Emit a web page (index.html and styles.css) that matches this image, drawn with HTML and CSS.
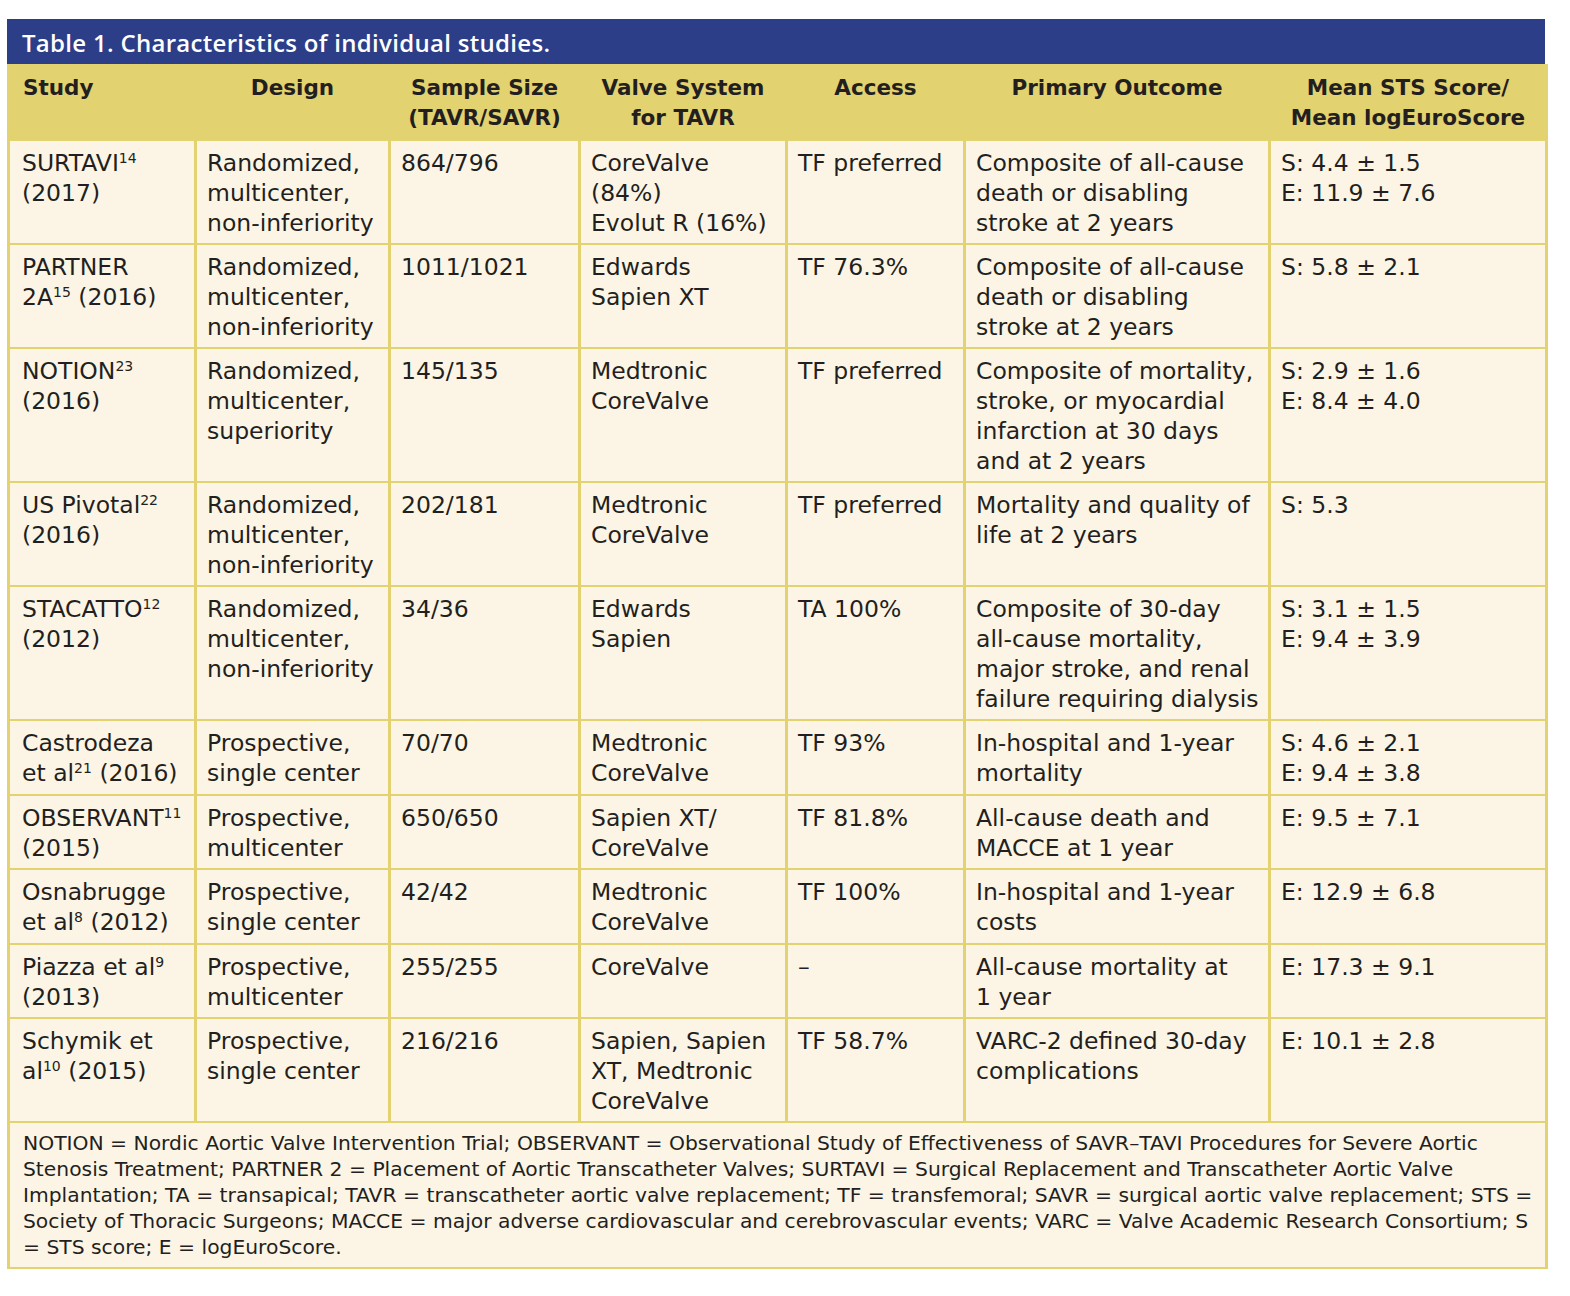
FILE: index.html
```html
<!DOCTYPE html>
<html>
<head>
<meta charset="utf-8">
<link rel="stylesheet" href="styles.css">
</head>
<body>
<div class="wrap">
  <div class="title">Table 1. Characteristics of individual studies.</div>
  <table class="studies">
    <colgroup>
      <col class="c1"><col class="c2"><col class="c3"><col class="c4"><col class="c5"><col class="c6"><col class="c7">
    </colgroup>
    <thead>
      <tr>
        <th class="left">Study</th>
        <th>Design</th>
        <th>Sample Size<br>(TAVR/SAVR)</th>
        <th>Valve System<br>for TAVR</th>
        <th>Access</th>
        <th>Primary Outcome</th>
        <th>Mean STS Score/<br>Mean logEuroScore</th>
      </tr>
    </thead>
    <tbody>
      <tr>
        <td>SURTAVI<sup>14</sup><br>(2017)</td>
        <td>Randomized,<br>multicenter,<br>non-inferiority</td>
        <td>864/796</td>
        <td>CoreValve<br>(84%)<br>Evolut R (16%)</td>
        <td>TF preferred</td>
        <td>Composite of all-cause<br>death or disabling<br>stroke at 2 years</td>
        <td>S: 4.4 ± 1.5<br>E: 11.9 ± 7.6</td>
      </tr>
      <tr>
        <td>PARTNER<br>2A<sup>15</sup> (2016)</td>
        <td>Randomized,<br>multicenter,<br>non-inferiority</td>
        <td>1011/1021</td>
        <td>Edwards<br>Sapien XT</td>
        <td>TF 76.3%</td>
        <td>Composite of all-cause<br>death or disabling<br>stroke at 2 years</td>
        <td>S: 5.8 ± 2.1</td>
      </tr>
      <tr>
        <td>NOTION<sup>23</sup><br>(2016)</td>
        <td>Randomized,<br>multicenter,<br>superiority</td>
        <td>145/135</td>
        <td>Medtronic<br>CoreValve</td>
        <td>TF preferred</td>
        <td>Composite of mortality,<br>stroke, or myocardial<br>infarction at 30 days<br>and at 2 years</td>
        <td>S: 2.9 ± 1.6<br>E: 8.4 ± 4.0</td>
      </tr>
      <tr>
        <td>US Pivotal<sup>22</sup><br>(2016)</td>
        <td>Randomized,<br>multicenter,<br>non-inferiority</td>
        <td>202/181</td>
        <td>Medtronic<br>CoreValve</td>
        <td>TF preferred</td>
        <td>Mortality and quality of<br>life at 2 years</td>
        <td>S: 5.3</td>
      </tr>
      <tr>
        <td>STACATTO<sup>12</sup><br>(2012)</td>
        <td>Randomized,<br>multicenter,<br>non-inferiority</td>
        <td>34/36</td>
        <td>Edwards<br>Sapien</td>
        <td>TA 100%</td>
        <td>Composite of 30-day<br>all-cause mortality,<br>major stroke, and renal<br>failure requiring dialysis</td>
        <td>S: 3.1 ± 1.5<br>E: 9.4 ± 3.9</td>
      </tr>
      <tr class="two">
        <td>Castrodeza<br>et al<sup>21</sup> (2016)</td>
        <td>Prospective,<br>single center</td>
        <td>70/70</td>
        <td>Medtronic<br>CoreValve</td>
        <td>TF 93%</td>
        <td>In-hospital and 1-year<br>mortality</td>
        <td>S: 4.6 ± 2.1<br>E: 9.4 ± 3.8</td>
      </tr>
      <tr>
        <td>OBSERVANT<sup>11</sup><br>(2015)</td>
        <td>Prospective,<br>multicenter</td>
        <td>650/650</td>
        <td>Sapien XT/<br>CoreValve</td>
        <td>TF 81.8%</td>
        <td>All-cause death and<br>MACCE at 1 year</td>
        <td>E: 9.5 ± 7.1</td>
      </tr>
      <tr class="two">
        <td>Osnabrugge<br>et al<sup>8</sup> (2012)</td>
        <td>Prospective,<br>single center</td>
        <td>42/42</td>
        <td>Medtronic<br>CoreValve</td>
        <td>TF 100%</td>
        <td>In-hospital and 1-year<br>costs</td>
        <td>E: 12.9 ± 6.8</td>
      </tr>
      <tr>
        <td>Piazza et al<sup>9</sup><br>(2013)</td>
        <td>Prospective,<br>multicenter</td>
        <td>255/255</td>
        <td>CoreValve</td>
        <td>–</td>
        <td>All-cause mortality at<br>1 year</td>
        <td>E: 17.3 ± 9.1</td>
      </tr>
      <tr>
        <td>Schymik et<br>al<sup>10</sup> (2015)</td>
        <td>Prospective,<br>single center</td>
        <td>216/216</td>
        <td>Sapien, Sapien<br>XT, Medtronic<br>CoreValve</td>
        <td>TF 58.7%</td>
        <td>VARC-2 defined 30-day<br>complications</td>
        <td>E: 10.1 ± 2.8</td>
      </tr>
    </tbody>
    <tfoot>
      <tr>
        <td colspan="7" class="notes">NOTION = Nordic Aortic Valve Intervention Trial; OBSERVANT = Observational Study of Effectiveness of SAVR–TAVI Procedures for Severe Aortic<br>Stenosis Treatment; PARTNER 2 = Placement of Aortic Transcatheter Valves; SURTAVI = Surgical Replacement and Transcatheter Aortic Valve<br>Implantation; TA = transapical; TAVR = transcatheter aortic valve replacement; TF = transfemoral; SAVR = surgical aortic valve replacement; STS =<br>Society of Thoracic Surgeons; MACCE = major adverse cardiovascular and cerebrovascular events; VARC = Valve Academic Research Consortium; S<br>= STS score; E = logEuroScore.</td>
      </tr>
    </tfoot>
  </table>
</div>
</body>
</html>
```

FILE: styles.css
```css
body {
  margin: 0;
  background: #ffffff;
  font-family: "DejaVu Sans", "Open Sans", sans-serif;
  color: #231f20;
}

.wrap {
  margin: 19px 0 0 7px;
  width: 1538px;
}

.title {
  background: #2c3e88;
  color: #ffffff;
  font-family: "Open Sans", "DejaVu Sans", sans-serif;
  font-size: 24px;
  letter-spacing: 0.3px;
  font-weight: 600;
  height: 45px;
  line-height: 47px;
  padding-left: 15px;
  box-sizing: border-box;
  white-space: nowrap;
}

.studies {
  width: 1538px;
  table-layout: fixed;
  border-collapse: collapse;
  background: #fcf5e6;
  font-size: 23.5px;
  line-height: 30px;
}

.c1 { width: 187px; }
.c2 { width: 194px; }
.c3 { width: 190px; }
.c4 { width: 207px; }
.c5 { width: 178px; }
.c6 { width: 305px; }
.c7 { width: 277px; }

.studies th {
  background: #e3d270;
  font-size: 21.5px;
  font-weight: bold;
  text-align: center;
  vertical-align: top;
  padding: 9px 2px 6px 2px;
  border-left: 3px solid #e3d270;
  border-right: 3px solid #e3d270;
  white-space: nowrap;
}

.studies th.left {
  text-align: left;
  padding-left: 13px;
}

.studies td {
  vertical-align: top;
  text-align: left;
  padding: 7px 2px 5px 10px;
  border: 3px solid #e3d270;
  border-top-width: 2px;
  border-bottom-width: 0;
  white-space: nowrap;
}

.studies tr.two td {
  padding-bottom: 6px;
}

.studies tbody td:first-child {
  padding-left: 12px;
}

.studies sup {
  font-size: 14px;
  line-height: 0;
  vertical-align: 8px;
}

.studies td.notes {
  font-size: 20.3px;
  line-height: 26px;
  padding: 7px 4px 7px 13px;
  border-top-width: 2px;
  border-bottom-width: 2px;
}
```
